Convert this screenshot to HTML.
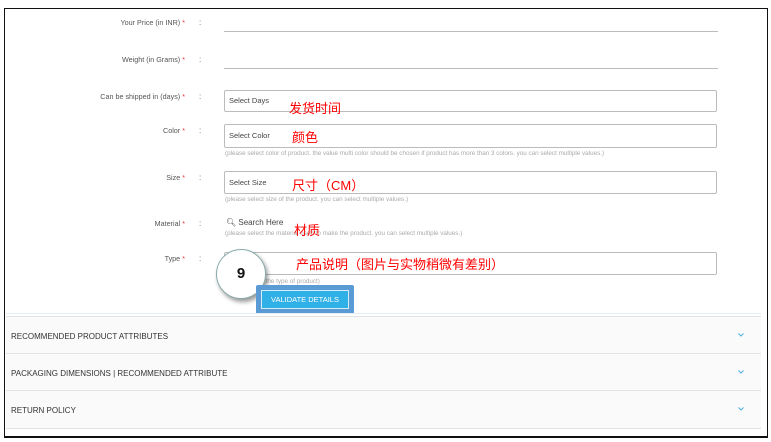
<!DOCTYPE html>
<html><head><meta charset="utf-8"><style>
body{margin:0;width:771px;height:442px;background:#fff;position:relative;overflow:hidden;font-family:"Liberation Sans",sans-serif;}
.a{position:absolute}
.frame{left:4px;top:8px;width:762px;height:427px;border:1.5px solid #111;border-bottom-width:2px;}
.lbl{font-size:7.2px;color:#555;text-align:right;width:185px;left:0}
.lbl b{color:#e33;font-weight:normal}
.col{left:199px;font-size:8px;color:#666}
.box{left:224px;width:493px;border:1px solid #bbb;border-radius:2px;background:#fff;font-size:7.5px;color:#444;box-sizing:border-box;padding-left:4px}
.ul{left:224px;width:494px;height:1px;background:#bbb}
.help{left:225px;font-size:6.3px;color:#aaa;white-space:nowrap}
.cn{color:#f00;font-family:"Liberation Sans","Noto Sans CJK SC",sans-serif;font-size:13px}
.acc{left:6px;width:755px;background:#fafafa;border-top:1px solid #e3e3e3;font-size:8px;color:#333}
.acc span{position:absolute;left:5px}
.acc svg{position:absolute;left:732px;top:16px}
</style></head><body>
<div class="a frame"></div>
<div class="a lbl" style="top:18px">Your Price (in INR) <b>*</b></div><div class="a col" style="top:18px">:</div>
<div class="a ul" style="top:31px"></div>
<div class="a lbl" style="top:55px">Weight (in Grams) <b>*</b></div><div class="a col" style="top:55px">:</div>
<div class="a ul" style="top:68px"></div>
<div class="a lbl" style="top:92px">Can be shipped in (days) <b>*</b></div><div class="a col" style="top:92px">:</div>
<div class="a box" style="top:90px;height:22px;line-height:20px">Select Days</div>
<div class="a cn" style="left:289px;top:98px">发货时间</div>
<div class="a lbl" style="top:126px">Color <b>*</b></div><div class="a col" style="top:126px">:</div>
<div class="a box" style="top:124px;height:24px;line-height:22px">Select Color</div>
<div class="a cn" style="left:292px;top:127px">颜色</div>
<div class="a help" style="top:150px">(please select color of product. the value multi color should be chosen if product has more than 3 colors. you can select multiple values.)</div>
<div class="a lbl" style="top:173px">Size <b>*</b></div><div class="a col" style="top:173px">:</div>
<div class="a box" style="top:171px;height:23px;line-height:21px">Select Size</div>
<div class="a cn" style="left:292px;top:175px">尺寸（CM）</div>
<div class="a help" style="top:196px">(please select size of the product. you can select multiple values.)</div>
<div class="a lbl" style="top:219px">Material <b>*</b></div><div class="a col" style="top:219px">:</div>
<div class="a" style="left:226px;top:218px;font-size:8px;color:#444">&#x1F50D;&#xFE0E; Search Here</div>
<div class="a help" style="top:230px">(please select the material used to make the product. you can select multiple values.)</div>
<div class="a cn" style="left:294px;top:220px;background:transparent">材质</div>
<div class="a lbl" style="top:254px">Type <b>*</b></div><div class="a col" style="top:254px">:</div>
<div class="a box" style="top:252px;height:23px"></div>
<div class="a cn" style="left:296px;top:254px">产品说明（图片与实物稍微有差别）</div>
<div class="a help" style="top:278px">(please select the type of product)</div>
<div class="a" style="left:216px;top:249px;width:48px;height:48px;border-radius:50%;background:#fff;border:1px solid #8aa;box-shadow:2px 3px 4px rgba(0,0,0,.4);text-align:center;line-height:48px;font-weight:bold;font-size:15px;color:#111">9</div>
<div class="a" style="left:256px;top:285px;width:98px;height:29px;background:#5b9bd5;border-radius:2px"></div>
<div class="a" style="left:261px;top:290px;width:88px;height:19px;background:#2fb0e6;border:1px solid #d6ecf7;box-sizing:border-box;color:#fff;font-size:7.5px;text-align:center;line-height:17px">VALIDATE DETAILS</div>
<div class="a" style="left:6px;top:313px;width:755px;height:1px;background:#e6eef4"></div>
<div class="a acc" style="top:316px;height:37px"><span style="top:15px">RECOMMENDED PRODUCT ATTRIBUTES</span><svg width="6" height="4"><path d="M0.5 0.5L3 3L5.5 0.5" stroke="#4aaee0" fill="none"/></svg></div>
<div class="a acc" style="top:353px;height:37px"><span style="top:15px">PACKAGING DIMENSIONS | RECOMMENDED ATTRIBUTE</span><svg width="6" height="4"><path d="M0.5 0.5L3 3L5.5 0.5" stroke="#4aaee0" fill="none"/></svg></div>
<div class="a acc" style="top:390px;height:37px;border-bottom:1px solid #e3e3e3"><span style="top:15px">RETURN POLICY</span><svg width="6" height="4"><path d="M0.5 0.5L3 3L5.5 0.5" stroke="#4aaee0" fill="none"/></svg></div>
</body></html>
